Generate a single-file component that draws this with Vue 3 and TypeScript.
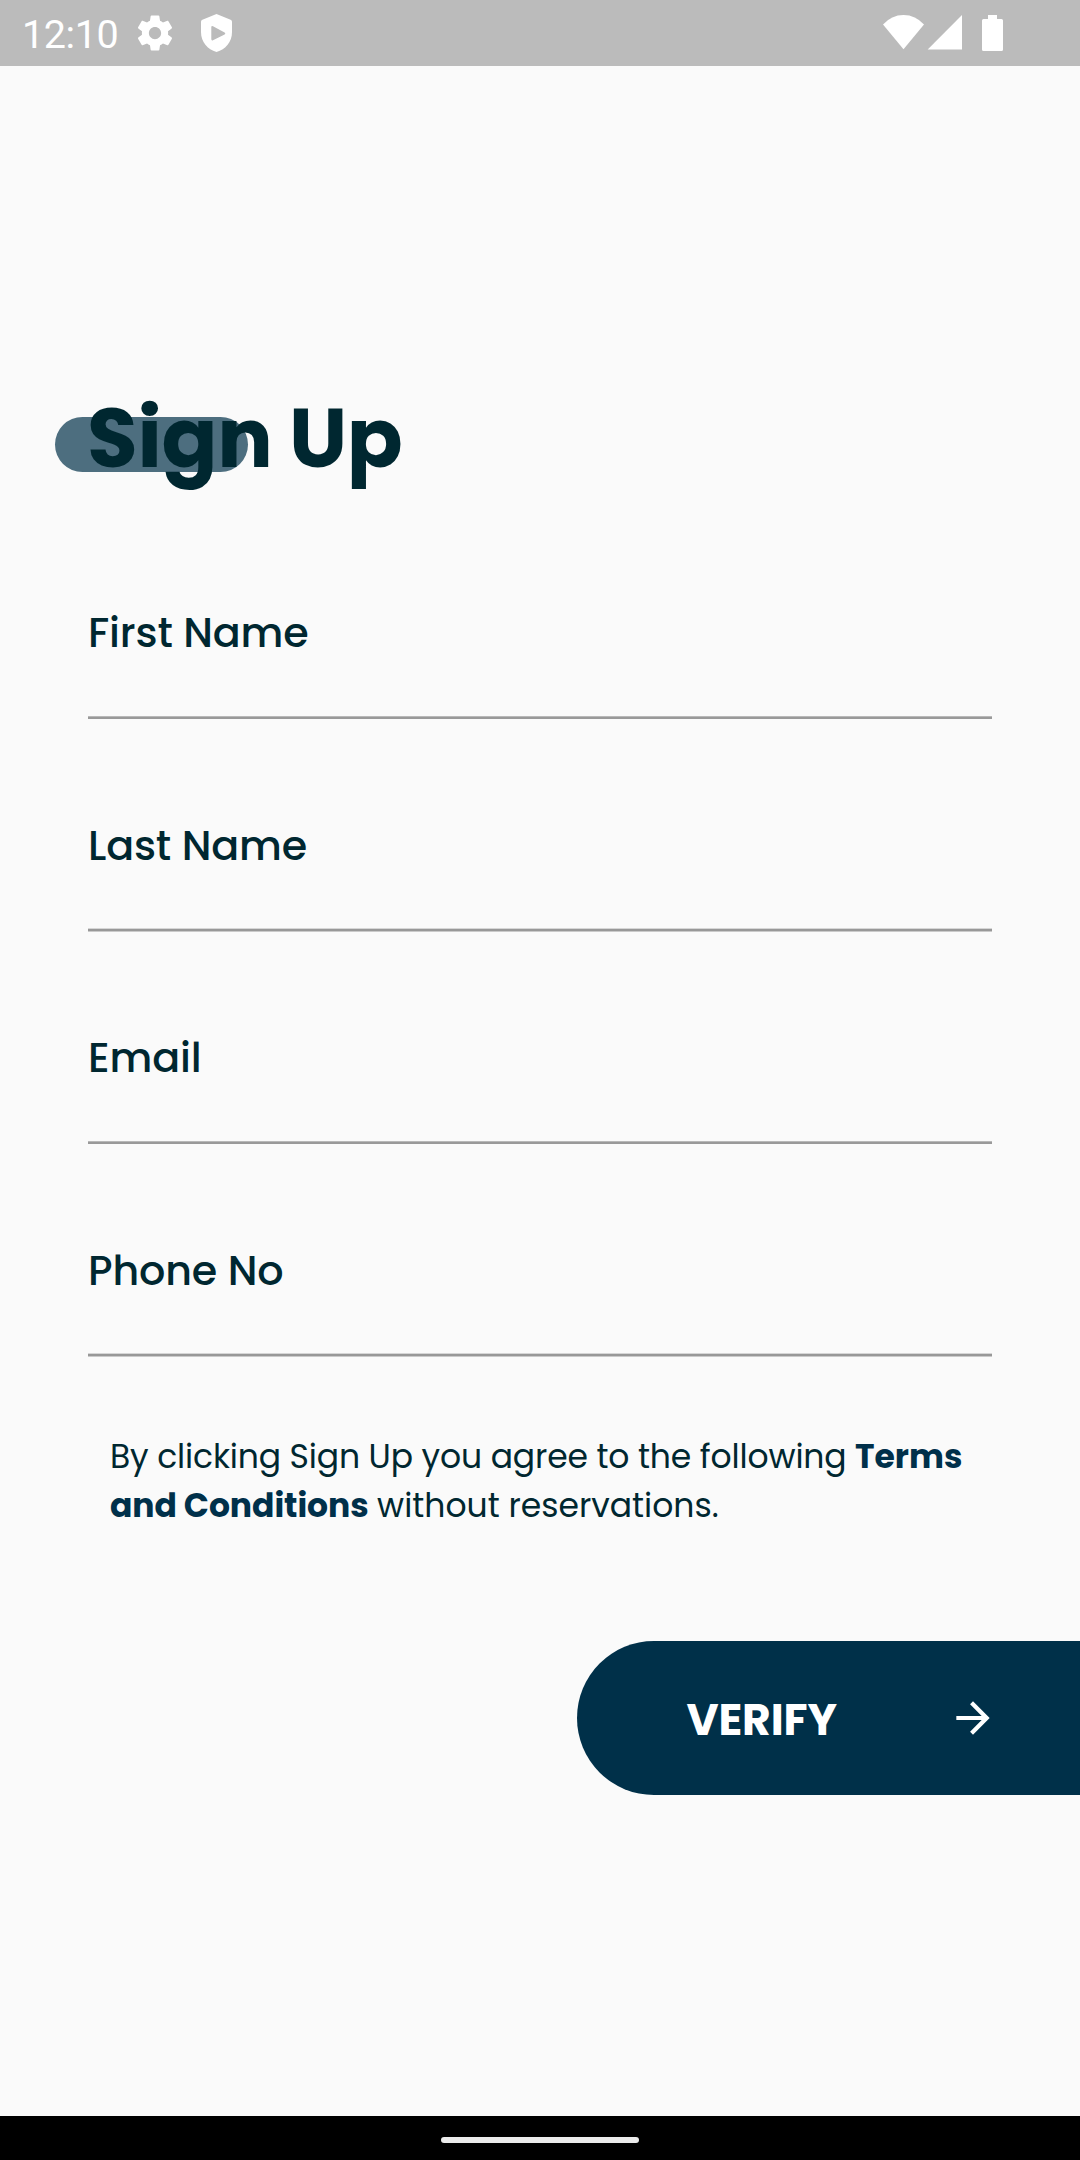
<script setup lang="ts">
interface Field {
  id: string
  label: string
  soft: boolean
}

const fields: Field[] = [
  { id: 'first', label: 'First Name', soft: false },
  { id: 'last', label: 'Last Name', soft: true },
  { id: 'email', label: 'Email', soft: false },
  { id: 'phone', label: 'Phone No', soft: true },
]
</script>

<template>
  <div class="screen">
    <header class="status">
      <div class="status-left">
        <span class="time">12:10</span>
        <svg class="gear" viewBox="0 0 24 24" fill="#fff">
          <path d="M19.43 12.98c.04-.32.07-.64.07-.98s-.03-.66-.07-.98l2.11-1.65c.19-.15.24-.42.12-.64l-2-3.46c-.12-.22-.39-.3-.61-.22l-2.49 1c-.52-.4-1.08-.73-1.69-.98l-.38-2.65C14.46 2.18 14.25 2 14 2h-4c-.25 0-.46.18-.49.42l-.38 2.65c-.61.25-1.17.59-1.69.98l-2.49-1c-.23-.09-.49 0-.61.22l-2 3.46c-.13.22-.07.49.12.64l2.11 1.65c-.04.32-.07.65-.07.98s.03.66.07.98l-2.11 1.65c-.19.15-.24.42-.12.64l2 3.46c.12.22.39.3.61.22l2.49-1c.52.4 1.08.73 1.69.98l.38 2.65c.03.24.24.42.49.42h4c.25 0 .46-.18.49-.42l.38-2.65c.61-.25 1.17-.59 1.69-.98l2.49 1c.23.09.49 0 .61-.22l2-3.46c.12-.22.07-.49-.12-.64l-2.11-1.65zM12 15.5c-1.93 0-3.5-1.57-3.5-3.5s1.57-3.5 3.5-3.5 3.5 1.57 3.5 3.5-1.57 3.5-3.5 3.5z" />
        </svg>
        <svg class="shield" viewBox="0 0 31 38" fill="#fff" fill-rule="evenodd">
          <path d="M15.5 0L29.6 5.7Q31 6.300 31 7.800V18C31 28 24.500 35.500 15.500 38C6.500 35.500 0 28 0 18V7.800Q0 6.300 1.400 5.700ZM10.300 13.300V25.100Q10.300 27 12 26.200L23.600 20.500Q25.200 19.500 23.600 18.500L12 12.200Q10.300 11.400 10.300 13.300Z" />
        </svg>
      </div>
      <svg class="signals" viewBox="0 0 120 37" fill="#fff">
        <path d="M0 9.500Q8.500 0 20.500 0T41 9.500L20.500 34.300Z" />
        <path d="M44.700 34.500H79V0Z" />
        <path d="M105 0h9v4h4.500q1.500 0 1.500 1.500v29q0 1.500-1.500 1.500h-18q-1.500 0-1.500-1.500v-29q0-1.500 1.500-1.500h4.500z" />
      </svg>
    </header>

    <main class="content">
      <h1 class="title">Sign Up</h1>

      <form class="form">
        <div v-for="f in fields" :key="f.id" class="field" :class="[f.id, { soft: f.soft }]">
          <label class="label">{{ f.label }}</label>
          <div class="rule"></div>
        </div>
      </form>

      <p class="terms">
        <span class="line"><span class="lead">By clicking Sign Up you agree to the following</span><b>Terms</b></span>
        <span class="line"><b class="tight">and Conditions</b><span>without reservations.</span></span>
      </p>

      <button class="verify" type="button">
        <span class="verify-text">VERIFY</span>
        <svg class="arrow" viewBox="0 0 24 24" fill="#fff">
          <path d="M12 4l-1.410 1.410L16.170 11H4v2h12.170l-5.580 5.590L12 20l8-8z" />
        </svg>
      </button>
    </main>

    <footer class="nav"><div class="handle"></div></footer>
  </div>
</template>

<style>
body {
  background: #fafafa;
}
</style>

<style scoped>
.screen {
  width: 1080px;
  height: 2160px;
  display: flex;
  flex-direction: column;
  overflow: hidden;
  background: #fafafa;
  color: #002730;
  font-family: Poppins, Inter, sans-serif;
}
.status {
  flex: none;
  box-sizing: border-box;
  height: 66px;
  padding: 0 77px 0 22px;
  display: flex;
  align-items: flex-start;
  justify-content: space-between;
  background: #bbb;
}
.status-left {
  display: flex;
  align-items: flex-start;
}
.time {
  width: 113px;
  font: 400 39.500px/70px Roboto, sans-serif;
  letter-spacing: -0.4px;
  color: #fff;
}
.gear {
  width: 42px;
  height: 42px;
  margin: 12.300px 0 0 -0.900px;
}
.shield {
  width: 31px;
  height: 38px;
  margin: 14px 0 0 24.900px;
}
.signals {
  width: 120px;
  height: 37px;
  margin-top: 15px;
}
.content {
  flex: 1;
  display: flex;
  flex-direction: column;
}
.title {
  position: relative;
  z-index: 0;
  align-self: flex-start;
  margin: 322px 0 0 87px;
  font-size: 82.500px;
  line-height: 100px;
  font-weight: 700;
  letter-spacing: -0.250px;
  word-spacing: -1px;
}
.title::before {
  content: '';
  position: absolute;
  z-index: -1;
  left: -32px;
  top: 29px;
  width: 193px;
  height: 55px;
  border-radius: 28px;
  background: #4d6e7f;
}
.form {
  margin: 114px 88px 0;
}
.field {
  height: 212px;
}
.field.soft {
  height: 213px;
}
.label {
  display: block;
  box-sizing: border-box;
  height: 114px;
  padding-top: 1px;
  font-size: 41.250px;
  line-height: 60px;
  font-weight: 500;
  letter-spacing: -0.150px;
}
.soft .label {
  padding-top: 2px;
}
.rule {
  height: 3px;
  background: linear-gradient(#b8b8b8 1px, #999 1px);
}
.soft .rule {
  height: 4px;
  background: linear-gradient(#d6d6d6 1px, #989898 1px 3px, #cacaca 3px);
}
.terms {
  margin: -20px 0 0 110px;
  font-size: 33px;
  line-height: 49px;
  font-weight: 400;
}
.line {
  display: flex;
  gap: 8.500px;
  white-space: nowrap;
}
.lead {
  letter-spacing: -0.140px;
}
.terms b {
  font-weight: 700;
  color: #00304a;
}
.terms .tight {
  letter-spacing: -0.060px;
}
.verify {
  align-self: flex-end;
  box-sizing: border-box;
  width: 503.500px;
  height: 154px;
  margin: 111px 0 0;
  padding: 0 82px 0 110px;
  border: 0;
  border-radius: 77px 0 0 77px;
  background: #003049;
  color: #fff;
  font: inherit;
  display: flex;
  align-items: center;
  justify-content: space-between;
}
.verify-text {
  font-size: 44px;
  line-height: 60px;
  font-weight: 700;
  letter-spacing: -0.150px;
  padding-top: 3px;
}
.arrow {
  width: 50px;
  height: 50px;
}
.nav {
  flex: none;
  height: 44px;
  background: #000;
  display: flex;
  justify-content: center;
  align-items: flex-start;
}
.handle {
  width: 198px;
  height: 6px;
  margin-top: 21px;
  border-radius: 3px;
  background: #ebebeb;
}
</style>
